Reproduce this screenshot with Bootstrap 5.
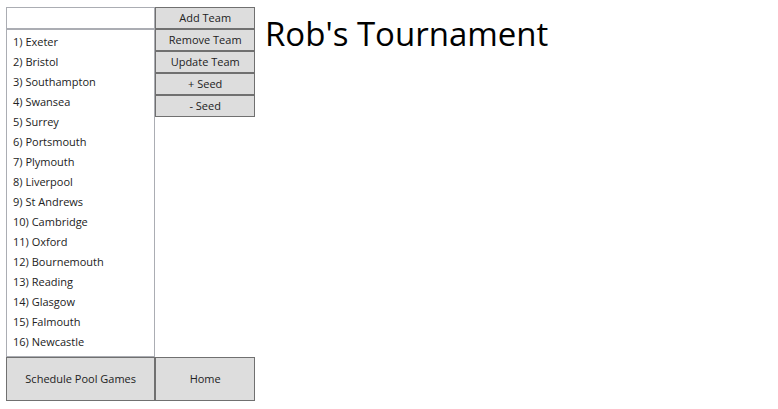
<!DOCTYPE html>
<html lang="en">
<head>
<meta charset="utf-8">
<meta name="viewport" content="width=device-width, initial-scale=1">
<title>Rob's Tournament</title>
<link href="https://cdn.jsdelivr.net/npm/bootstrap@5.3.0/dist/css/bootstrap.min.css" rel="stylesheet">
<style>
body { font-family: "Open Sans", "Noto Sans", sans-serif; font-size: 11px; line-height: 20px; color: #222; background: #fff; }
.app-shell { padding: 7px 6px 9px; }
.side-panel { flex: 0 0 249px; }
.team-pane { width: 60%; }
.action-pane { width: 40%; }
.team-name { height: 22px; padding: 0 6px; font-size: 11px; border: 1px solid #abadb3; border-radius: 0; }
.team-list { border: 1px solid #abadb3; padding: 2px 0 4px; }
.team-list .list-group-item { padding: 0 6px; color: #222; background: transparent; }
.btn-tool { --bs-btn-padding-x: 4px; --bs-btn-padding-y: 0; --bs-btn-font-size: 11px; --bs-btn-border-radius: 0; --bs-btn-color: #222; --bs-btn-bg: #ddd; --bs-btn-border-color: #707070; --bs-btn-hover-bg: #bee6fd; --bs-btn-hover-border-color: #3c7fb1; line-height: 20px; white-space: nowrap; }
.btn-tall { height: 44px; }
.event-title { font-size: 33px; line-height: 54px; color: #000; padding-left: 10px; }
</style>
<script src="https://cdn.jsdelivr.net/npm/bootstrap@5.3.0/dist/js/bootstrap.bundle.min.js" defer></script>
</head>
<body>
<div class="app-shell d-flex min-vh-100">
  <aside class="side-panel d-flex flex-column">
    <div class="d-flex flex-grow-1">
      <div class="team-pane d-flex flex-column">
        <input type="text" class="team-name form-control" aria-label="Team name">
        <ul class="team-list list-group list-group-flush rounded-0 flex-grow-1 mb-0" aria-label="Teams">
          <li class="list-group-item border-0">1) Exeter</li>
          <li class="list-group-item border-0">2) Bristol</li>
          <li class="list-group-item border-0">3) Southampton</li>
          <li class="list-group-item border-0">4) Swansea</li>
          <li class="list-group-item border-0">5) Surrey</li>
          <li class="list-group-item border-0">6) Portsmouth</li>
          <li class="list-group-item border-0">7) Plymouth</li>
          <li class="list-group-item border-0">8) Liverpool</li>
          <li class="list-group-item border-0">9) St Andrews</li>
          <li class="list-group-item border-0">10) Cambridge</li>
          <li class="list-group-item border-0">11) Oxford</li>
          <li class="list-group-item border-0">12) Bournemouth</li>
          <li class="list-group-item border-0">13) Reading</li>
          <li class="list-group-item border-0">14) Glasgow</li>
          <li class="list-group-item border-0">15) Falmouth</li>
          <li class="list-group-item border-0">16) Newcastle</li>
        </ul>
      </div>
      <div class="action-pane d-flex flex-column">
        <button type="button" class="btn btn-tool">Add Team</button>
        <button type="button" class="btn btn-tool">Remove Team</button>
        <button type="button" class="btn btn-tool">Update Team</button>
        <button type="button" class="btn btn-tool">+ Seed</button>
        <button type="button" class="btn btn-tool">- Seed</button>
      </div>
    </div>
    <div class="d-flex">
      <button type="button" class="btn btn-tool btn-tall team-pane">Schedule Pool Games</button>
      <button type="button" class="btn btn-tool btn-tall action-pane">Home</button>
    </div>
  </aside>
  <main class="flex-grow-1">
    <h1 class="event-title fw-normal mb-0">Rob's Tournament</h1>
  </main>
</div>
</body>
</html>
